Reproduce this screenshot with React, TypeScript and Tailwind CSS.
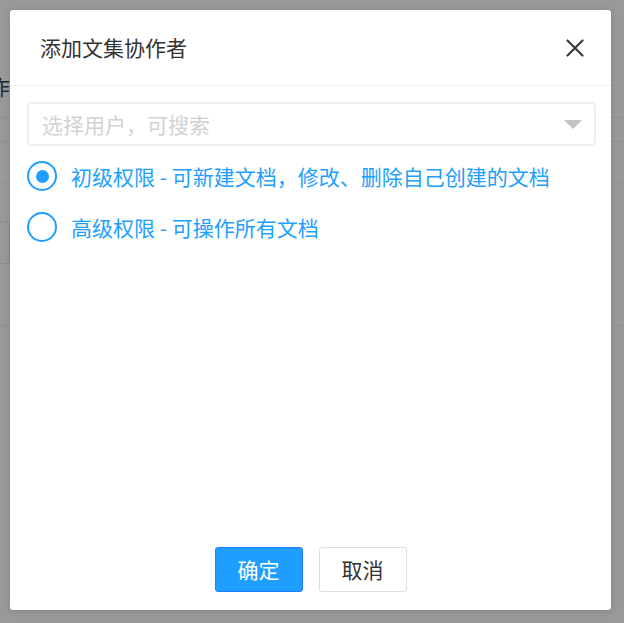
import React from 'react';

const FONT = '"Noto Sans CJK SC", "Noto Sans", sans-serif';

const OPTIONS = [
  { value: 'low', label: '初级权限 - 可新建文档，修改、删除自己创建的文档' },
  { value: 'high', label: '高级权限 - 可操作所有文档' },
];

const App: React.FC = () => {
  const [level, setLevel] = React.useState('low');

  return (
    <div className="relative w-[624px] h-[623px] overflow-hidden bg-[#999999]" style={{ fontFamily: FONT }}>
      {/* dimmed page behind the dialog */}
      <div className="flex flex-col">
        <div className="h-[74px]" />
        <div className="h-[24px] text-[21px] leading-[24px] text-[#1f2a36]">
          <span className="-ml-[11px]">作</span>
        </div>
        <div className="h-[20px] border-b border-[#8f8f8f]" />
        <div className="h-[24px] border-b border-[#8f8f8f]" />
        <div className="h-[42px] border-b border-[#939393]" />
        <div className="pt-[37px] h-[102px]">
          <div className="w-[10px] h-[43px] border border-l-0 border-[#8c8c8c] rounded-r-[3px]" />
        </div>
        <div className="h-[40px] border-b border-[#909090]" />
      </div>

      {/* dialog */}
      <div className="absolute left-[10px] top-[10px] w-[601px] h-[600px] bg-white rounded-[3px] shadow-[0_1px_6px_rgba(0,0,0,0.15)] flex flex-col">
        <div className="h-[76px] flex items-center justify-between pl-[30px] pr-[26px] border-b border-[#eeeeee]">
          <span className="text-[21px] text-[#333333] leading-none">添加文集协作者</span>
          <button type="button" className="w-[20px] h-[20px] flex items-center justify-center">
            <svg width="18" height="18" viewBox="0 0 18 18" fill="none">
              <path d="M1.5 1.5L16.5 16.5M16.5 1.5L1.5 16.5" stroke="#3a3a46" strokeWidth="2.2" strokeLinecap="round" />
            </svg>
          </button>
        </div>

        <div className="flex-1 flex flex-col pl-[17px] pr-[15px] pt-[16px]">
          <div className="h-[44px] border-2 border-[#eeeeee] rounded-[5px] flex items-center justify-between pl-[13px] pr-[12px]">
            <span className="text-[21px] text-[#d2d2d2] leading-none">选择用户，可搜索</span>
            <svg width="18" height="9" viewBox="0 0 18 9">
              <path d="M0 0H18L9 9Z" fill="#c2c2c2" />
            </svg>
          </div>

          <div className="flex flex-col gap-[21px] mt-[15px]">
            {OPTIONS.map((opt) => (
              <label key={opt.value} className="flex items-center gap-[14px] h-[30px] cursor-pointer" onClick={() => setLevel(opt.value)}>
                <span className="w-[30px] h-[30px] rounded-full border-2 border-[#1e9fff] flex items-center justify-center">
                  {level === opt.value && <span className="w-[13px] h-[13px] rounded-full bg-[#1e9fff]" />}
                </span>
                <span className="text-[21px] text-[#1e9fff] leading-none">{opt.label}</span>
              </label>
            ))}
          </div>
        </div>

        <div className="flex justify-center gap-[16px] pb-[18px]">
          <button type="button" className="h-[45px] px-[22px] bg-[#1e9fff] border-[1.5px] border-[#1e7cff] rounded-[3px] text-white text-[21px] leading-none">
            确定
          </button>
          <button type="button" className="h-[45px] px-[22px] bg-white border-[1.5px] border-[#dedede] rounded-[3px] text-[#333333] text-[21px] leading-none">
            取消
          </button>
        </div>
      </div>
    </div>
  );
};

export default App;
